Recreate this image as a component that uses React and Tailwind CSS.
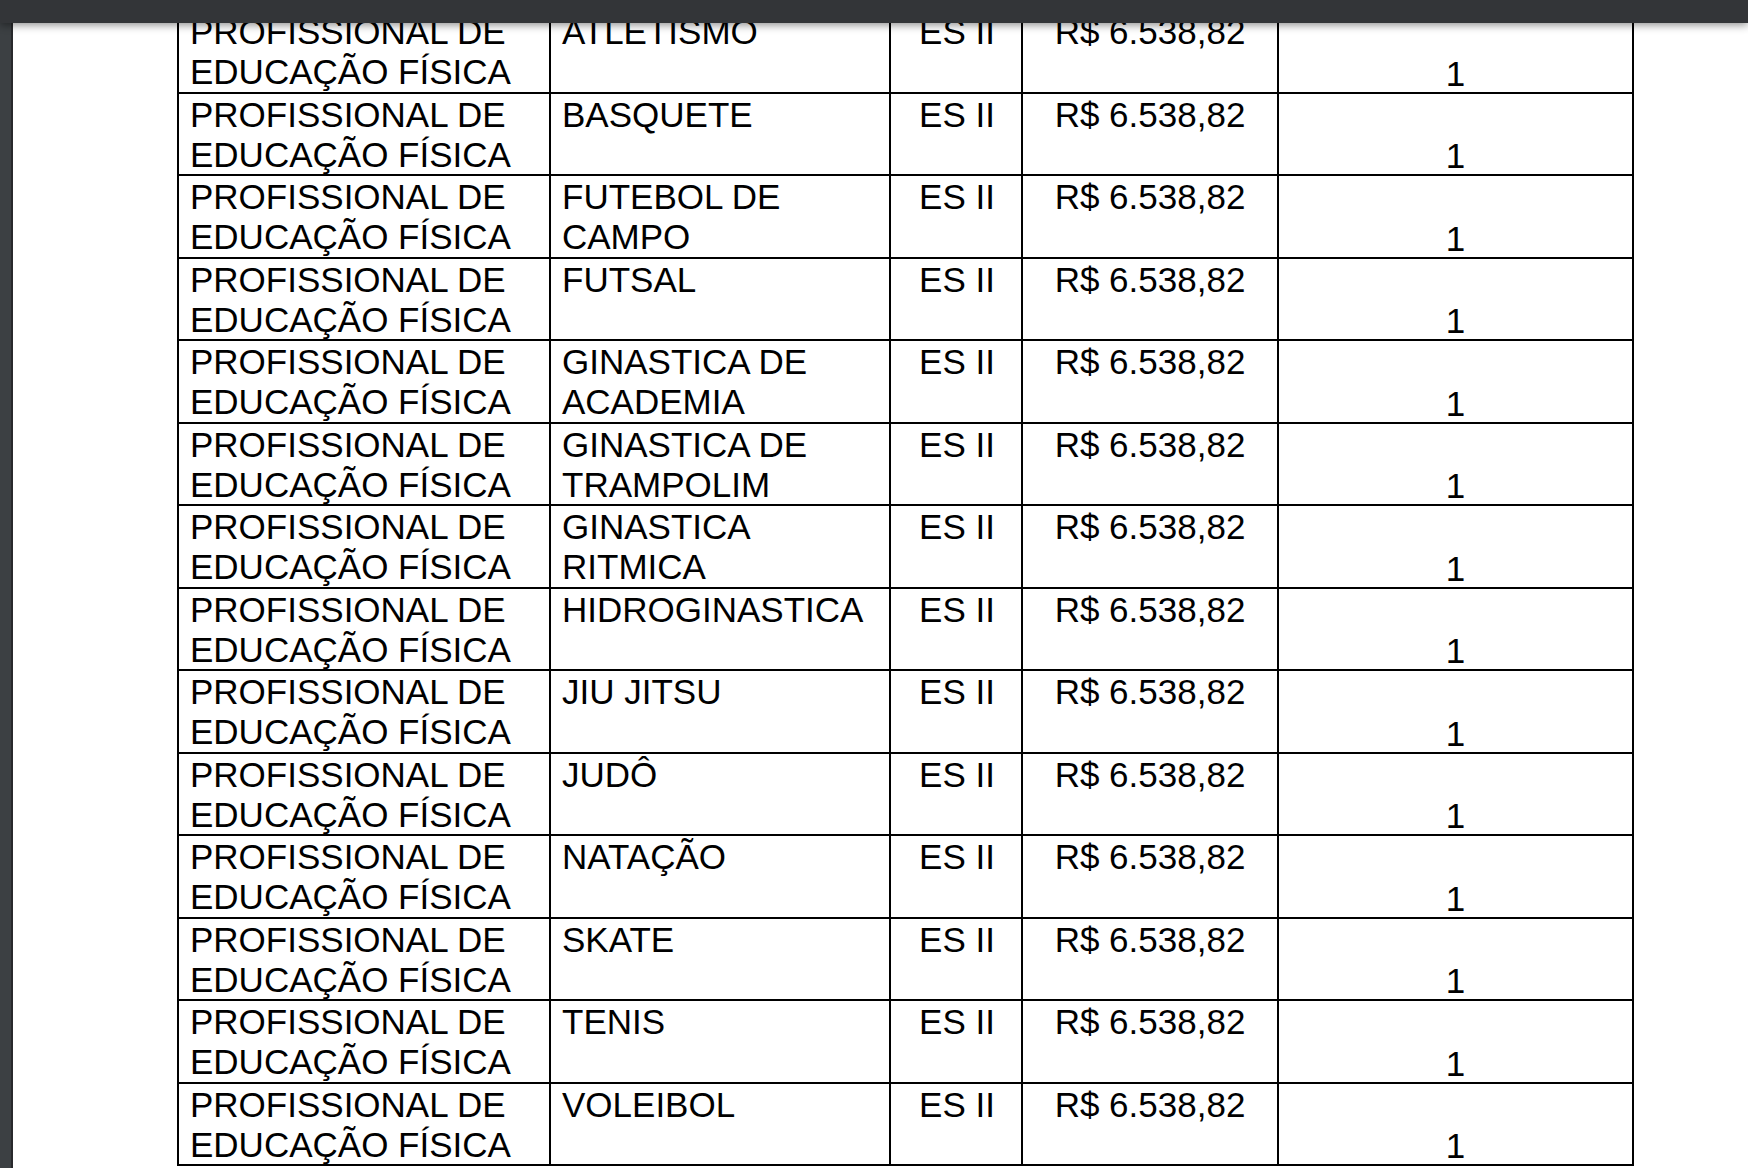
import React from 'react'

const rows = [
  'ATLETISMO',
  'BASQUETE',
  'FUTEBOL DE CAMPO',
  'FUTSAL',
  'GINASTICA DE ACADEMIA',
  'GINASTICA DE TRAMPOLIM',
  'GINASTICA RITMICA',
  'HIDROGINASTICA',
  'JIU JITSU',
  'JUDÔ',
  'NATAÇÃO',
  'SKATE',
  'TENIS',
  'VOLEIBOL',
]

const App = () => {
  return (
    <div className="relative h-screen w-full overflow-hidden bg-white font-['Liberation_Sans',Arial,sans-serif] text-black">
      {/* viewer toolbar over the scrolled page */}
      <div className="absolute inset-x-0 top-0 z-10 h-[23px] bg-[#333538] shadow-[0_2px_8px_rgba(0,0,0,0.45)]" />

      <div className="flex h-full">
        <div className="w-[13px] shrink-0 border-r-2 border-[#28292c] bg-[#3c4043]" />

        <div className="flex-1 pt-[9px] pl-[164px]">
          <div className="grid w-max grid-cols-[372px_340px_132px_256px_355px] auto-rows-[82.5px] border-t-2 border-l-2 border-black text-[35px] leading-[40px]">
            {rows.map((name) => (
              <React.Fragment key={name}>
                <div className="border-r-2 border-b-2 border-black pt-px pl-[11px]">
                  PROFISSIONAL DE EDUCAÇÃO FÍSICA
                </div>
                <div className="border-r-2 border-b-2 border-black pt-px pl-[11px] pr-1">
                  {name}
                </div>
                <div className="border-r-2 border-b-2 border-black pt-px pl-[2px] text-center whitespace-nowrap">
                  ES II
                </div>
                <div className="border-r-2 border-b-2 border-black pt-px text-center whitespace-nowrap">
                  R$ 6.538,82
                </div>
                <div className="flex items-end justify-center border-r-2 border-b-2 border-black leading-[36px]">
                  1
                </div>
              </React.Fragment>
            ))}
          </div>
        </div>
      </div>
    </div>
  )
}

export default App
